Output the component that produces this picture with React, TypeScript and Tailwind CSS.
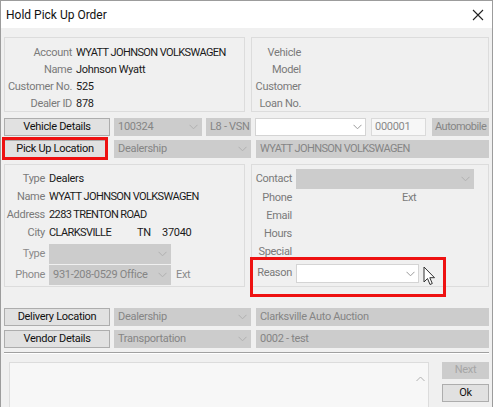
import React from 'react';

const FONT = { fontFamily: 'Roboto, "Noto Sans", sans-serif' };

const Chevron = ({ color = '#a8a8a8' }: { color?: string }) => (
  <svg width="9" height="6" viewBox="0 0 9 6" className="shrink-0">
    <path d="M0.5 0.8 L4.5 4.8 L8.5 0.8" fill="none" stroke={color} strokeWidth="1" />
  </svg>
);

interface ComboProps {
  text?: string;
  className?: string;
  variant?: 'disabled' | 'white' | 'field';
  chevron?: boolean;
}

// Windows-style combobox / text field
const Combo = ({ text = '', className = '', variant = 'disabled', chevron = true }: ComboProps) => {
  const look =
    variant === 'disabled'
      ? 'bg-[#cccccc] border-[#cccccc] text-[#858585]'
      : variant === 'white'
      ? 'bg-white border-[#d4d4d4] text-[#333]'
      : 'bg-[#f7f7f7] border-[#dadada] text-[#8a8a8a]';
  return (
    <div className={`flex items-center overflow-hidden border px-[3px] ${look} ${className}`}>
      <span className="flex-1 whitespace-nowrap">{text}</span>
      {chevron && <Chevron color={variant === 'white' ? '#9a9a9a' : '#b0b0b0'} />}
    </div>
  );
};

const Btn = ({ label, className = '' }: { label: string; className?: string }) => (
  <div
    className={`flex items-center justify-center whitespace-nowrap border border-[#adadad] bg-[#e1e1e1] text-[#111] ${className}`}
  >
    {label}
  </div>
);

const Row = ({ label, value, lw, h = 17 }: { label: string; value?: React.ReactNode; lw: number; h?: number }) => (
  <div className="flex items-center whitespace-nowrap" style={{ height: h }}>
    <span className="shrink-0 text-right text-[#7a7a7a]" style={{ width: lw }}>
      {label}
    </span>
    <span className="pl-[4px] text-[#1a1a1a]">{value}</span>
  </div>
);

const Caps = ({ children }: { children: React.ReactNode }) => (
  <span className="tracking-[-0.6px]">{children}</span>
);

export default function App() {
  return (
    <div className="flex h-[407px] w-[496px] overflow-hidden bg-white text-[11px] tracking-[-0.3px]" style={FONT}>
      <div className="flex w-[493px] shrink-0 flex-col border-l border-t border-r border-[#9c9c9c] bg-[#f0f0f0]">
        {/* Title bar */}
        <div className="flex h-[27px] shrink-0 items-center justify-between bg-white pl-[5px] pr-[8px]">
          <span className="text-[12px] tracking-normal text-[#111]">Hold Pick Up Order</span>
          <svg width="12" height="12" viewBox="0 0 12 12">
            <path d="M1 1 L11 11 M11 1 L1 11" stroke="#222" strokeWidth="1.1" />
          </svg>
        </div>

        <div className="flex flex-col px-[3px] pt-[9px]">
          {/* Account / vehicle panels */}
          <div className="flex gap-[6px]">
            <div className="h-[75px] w-[242px] border border-[#dcdcdc] pt-[7px]">
              <Row lw={67} label="Account" value={<Caps>WYATT JOHNSON VOLKSWAGEN</Caps>} />
              <Row lw={67} label="Name" value="Johnson Wyatt" />
              <Row lw={67} label="Customer No." value="525" />
              <Row lw={67} label="Dealer ID" value="878" />
            </div>
            <div className="h-[75px] w-[239px] border border-[#dcdcdc] pt-[7px]">
              <Row lw={49} label="Vehicle" />
              <Row lw={49} label="Model" />
              <Row lw={49} label="Customer" />
              <Row lw={49} label="Loan No." />
            </div>
          </div>

          {/* Vehicle details row */}
          <div className="mt-[6px] flex h-[18px] items-stretch">
            <Btn label="Vehicle Details" className="w-[106px]" />
            <Combo text="100324" className="ml-[4px] w-[88px]" />
            <Combo text="L8 - VSN" className="ml-[4px] w-[45px]" chevron={false} />
            <Combo variant="white" className="ml-[4px] w-[111px]" />
            <Combo variant="field" text="000001" className="ml-[5px] w-[55px]" chevron={false} />
            <Combo text="Automobile" className="ml-[6px] flex-1 !px-[2px] tracking-[-0.5px]" chevron={false} />
          </div>

          {/* Pick up row */}
          <div className="mt-[4px] flex h-[18px] items-stretch">
            <div className="relative w-[106px]">
              <Btn label="Pick Up Location" className="h-full w-[102px] border-[#0078d7]" />
              <div className="absolute -left-[2px] -top-[3px] h-[23px] w-[106px] border-[3px] border-[#ee1111]" />
            </div>
            <Combo text="Dealership" className="ml-[4px] w-[137px]" />
            <Combo text="WYATT JOHNSON VOLKSWAGEN" className="ml-[5px] flex-1 tracking-[-0.6px]" chevron={false} />
          </div>

          {/* Location / contact panels */}
          <div className="mt-[6px] flex gap-[6px]">
            <div className="h-[123px] w-[242px] border border-[#dcdcdc] pt-[5px]">
              <Row lw={40} h={18} label="Type" value="Dealers" />
              <Row lw={40} h={18} label="Name" value={<Caps>WYATT JOHNSON VOLKSWAGEN</Caps>} />
              <Row lw={40} h={18} label="Address" value={<Caps>2283 TRENTON ROAD</Caps>} />
              <Row
                lw={40}
                h={18}
                label="City"
                value={
                  <span className="flex">
                    <span className="w-[88px] tracking-[-0.6px]">CLARKSVILLE</span>
                    <span className="w-[25px]">TN</span>
                    <span>37040</span>
                  </span>
                }
              />
              <div className="mt-[2px] flex h-[20px] items-stretch">
                <span className="flex w-[40px] items-center justify-end text-[#8a8a8a]">Type</span>
                <Combo className="ml-[4px] w-[122px]" />
              </div>
              <div className="mt-[1px] flex h-[20px] items-stretch">
                <span className="flex w-[40px] items-center justify-end text-[#8a8a8a]">Phone</span>
                <Combo text="931-208-0529 Office" className="ml-[4px] w-[122px]" />
                <span className="ml-[5px] flex items-center text-[#8a8a8a]">Ext</span>
              </div>
            </div>

            <div className="relative h-[123px] w-[239px] border border-[#dcdcdc] pt-[4px]">
              <div className="flex h-[20px] items-stretch">
                <span className="flex w-[40px] items-center justify-end text-[#7a7a7a]">Contact</span>
                <Combo className="ml-[4px] w-[178px]" />
              </div>
              <div className="flex h-[18px] items-center">
                <span className="w-[40px] text-right text-[#7a7a7a]">Phone</span>
                <span className="ml-[110px] text-[#7a7a7a]">Ext</span>
              </div>
              <Row lw={40} h={18} label="Email" />
              <Row lw={40} h={18} label="Hours" />
              <Row lw={40} h={18} label="Special" />
              <div className="mt-[3px] flex h-[19px] items-stretch">
                <span className="flex w-[40px] items-center justify-end text-[#7a7a7a]">Reason</span>
                <Combo variant="white" className="ml-[4px] w-[123px] border-[#7a7a7a]" />
              </div>
              {/* highlight box */}
              <div className="absolute -left-[2px] top-[92px] h-[40px] w-[196px] border-[3px] border-[#ee1111]" />
              {/* mouse pointer */}
              <svg className="absolute left-[171px] top-[101px]" width="13" height="20" viewBox="0 0 13 20">
                <path
                  d="M1 1 L1 16 L4.5 12.5 L7 18.5 L9.3 17.5 L6.8 11.7 L11.5 11.7 Z"
                  fill="#fff"
                  stroke="#333"
                  strokeWidth="1"
                  strokeLinejoin="round"
                />
              </svg>
            </div>
          </div>

          {/* Delivery row */}
          <div className="mt-[21px] flex h-[18px] items-stretch">
            <Btn label="Delivery Location" className="w-[106px]" />
            <Combo text="Dealership" className="ml-[4px] w-[137px]" />
            <Combo text="Clarksville Auto Auction" className="ml-[5px] flex-1" chevron={false} />
          </div>
          {/* Vendor row */}
          <div className="mt-[4px] flex h-[18px] items-stretch">
            <Btn label="Vendor Details" className="w-[106px]" />
            <Combo text="Transportation" className="ml-[4px] w-[137px]" />
            <Combo text="0002 - test" className="ml-[5px] flex-1" chevron={false} />
          </div>

          <div className="mt-[4px] h-[2px] border-t border-b border-t-[#a0a0a0] border-b-white" />

          {/* Bottom area */}
          <div className="mt-[8px] flex gap-[13px]">
            <div className="ml-[5px] flex h-[60px] w-[420px] justify-end border border-[#dcdcdc] bg-[#f7f7f7]">
              <div className="flex w-[16px] flex-col items-center pt-[13px]">
                <svg width="9" height="6" viewBox="0 0 9 6">
                  <path d="M0.5 5 L4.5 1 L8.5 5" fill="none" stroke="#b0b0b0" strokeWidth="1" />
                </svg>
              </div>
            </div>
            <div className="flex flex-1 flex-col gap-[5px]">
              <div className="flex h-[17px] items-center justify-center bg-[#cccccc] text-[#a6a6a6]">Next</div>
              <Btn label="Ok" className="h-[18px]" />
              <Btn label="" className="h-[18px]" />
            </div>
          </div>
        </div>
      </div>
    </div>
  );
}
